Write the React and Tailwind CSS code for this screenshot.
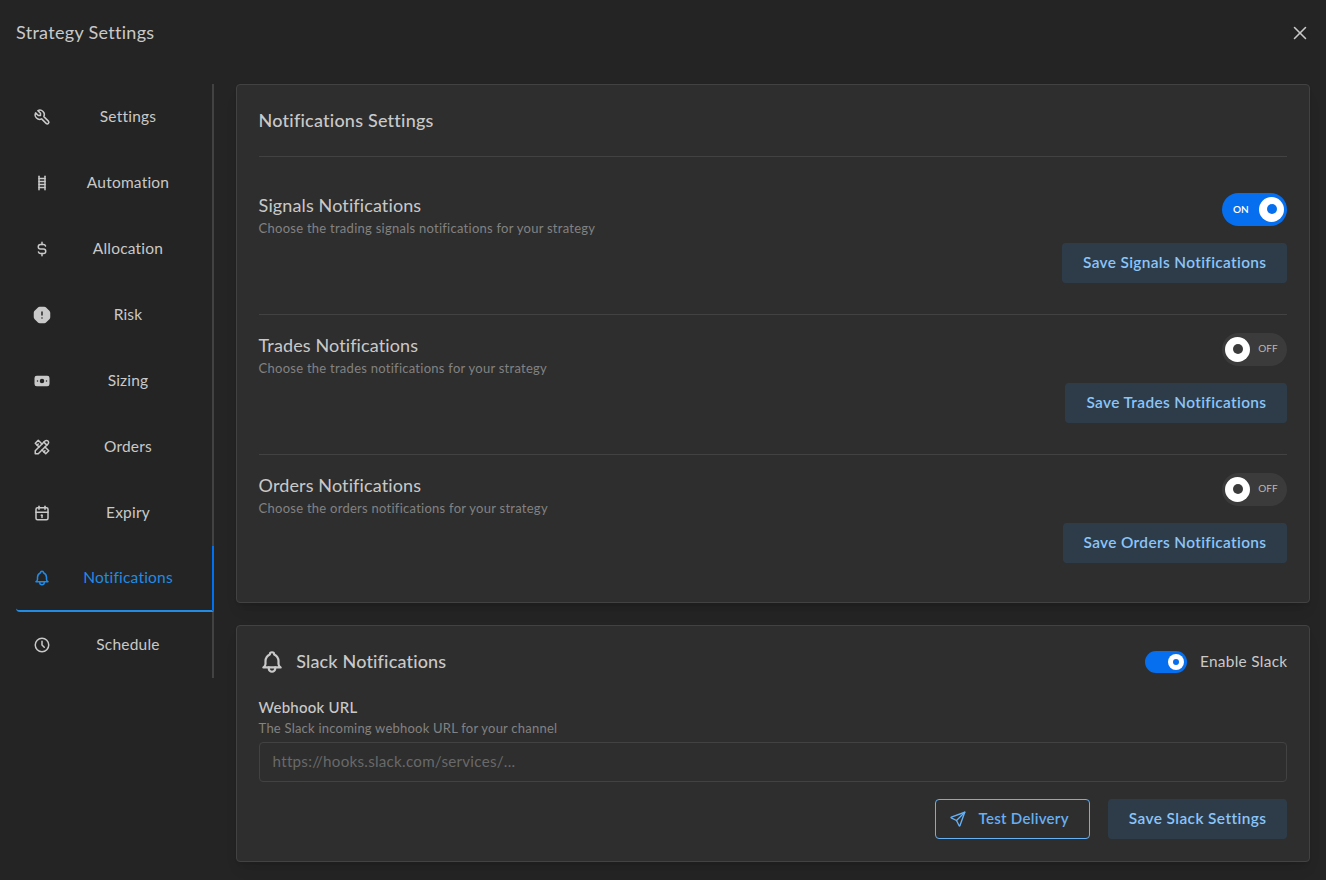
import React, { useState } from "react";
import {
  TbAlertOctagonFilled,
  TbBell,
  TbCalendar,
  TbCashBanknoteFilled,
  TbClock,
  TbCurrencyDollar,
  TbLadder,
  TbSend,
  TbTool,
  TbTools,
  TbX,
} from "react-icons/tb";

const TABS = [
  { label: "Settings", icon: TbTool },
  { label: "Automation", icon: TbLadder },
  { label: "Allocation", icon: TbCurrencyDollar },
  { label: "Risk", icon: TbAlertOctagonFilled },
  { label: "Sizing", icon: TbCashBanknoteFilled },
  { label: "Orders", icon: TbTools },
  { label: "Expiry", icon: TbCalendar },
  { label: "Notifications", icon: TbBell },
  { label: "Schedule", icon: TbClock },
];

const SECTIONS = [
  { name: "Signals", description: "Choose the trading signals notifications for your strategy" },
  { name: "Trades", description: "Choose the trades notifications for your strategy" },
  { name: "Orders", description: "Choose the orders notifications for your strategy" },
];

const CARD =
  "rounded border border-[#424242] bg-[#2e2e2e] px-[21.6px] shadow-[0_1px_3px_rgba(0,0,0,0.05),0_10px_15px_-5px_rgba(0,0,0,0.1),0_7px_7px_-5px_rgba(0,0,0,0.08)]";

function LabelSwitch({ checked, onChange }) {
  return (
    <button
      role="switch"
      aria-checked={checked}
      onClick={() => onChange(!checked)}
      className={`flex h-[33px] w-[65px] items-center rounded-full px-[3px] text-[10px] ${
        checked ? "flex-row-reverse bg-[#066ff0] font-semibold text-white" : "bg-[#3b3b3b] text-[#b8b8b8]"
      }`}
    >
      <span className="mb-px flex size-[25px] items-center justify-center rounded-full bg-white">
        <span className={`size-[10px] rounded-full ${checked ? "bg-[#066ff0]" : "bg-[#3b3b3b]"}`} />
      </span>
      <span className={`flex-1 text-center ${checked ? "pr-[3px] pb-px" : "pb-[2px] pl-px"}`}>
        {checked ? "ON" : "OFF"}
      </span>
    </button>
  );
}

function LightButton({ children }) {
  return (
    <button className="h-10 rounded bg-[#2e3c4a] px-[21px] text-[15.4px] font-semibold tracking-[0.36px] whitespace-nowrap text-[#8bc5f9]">
      {children}
    </button>
  );
}

export default function App() {
  const [active, setActive] = useState("Notifications");
  const [enabled, setEnabled] = useState({ Signals: true, Trades: false, Orders: false });
  const [slack, setSlack] = useState(true);

  return (
    <div className="h-[880px] overflow-hidden bg-[#242424] px-4 font-['Lato',sans-serif] text-[#c9c9c9]">
      <header className="flex h-[66px] items-center justify-between">
        <h1 className="pb-px text-[18px] tracking-[0.3px]">Strategy Settings</h1>
        <button aria-label="Close" className="-mr-px">
          <TbX className="size-[22px]" strokeWidth={1.7} />
        </button>
      </header>

      <div className="mt-[18px] flex gap-[22px]">
        <nav className="flex w-[198px] shrink-0 flex-col self-start">
          {TABS.map(({ label, icon: Icon }) => (
            <button
              key={label}
              onClick={() => setActive(label)}
              className={`flex h-[66px] items-center border-r-2 pr-4 pl-[16.6px] text-[15.5px] ${
                active === label
                  ? "rounded-bl border-b-2 border-r-[#0070f3] border-b-[#228be6] text-[#228be6]"
                  : "border-r-[#424242]"
              }`}
            >
              <Icon className="size-[18px]" />
              <span className="ml-[9.4px] flex-1 text-center tracking-[0.2px]">{label}</span>
            </button>
          ))}
        </nav>

        <main className="flex min-w-0 flex-1 flex-col gap-[22px]">
          <section className={`${CARD} h-[519px]`}>
            <h2 className="flex h-[71px] items-center text-[18px] font-medium tracking-[0.22px]">
              Notifications Settings
            </h2>
            <div className="border-t border-[#424242] pt-[18px]">
              {SECTIONS.map(({ name, description }, i) => (
                <div
                  key={name}
                  className={`flex justify-between pt-[18px] ${i > 0 ? "h-[140px] border-t border-[#424242]" : "h-[139px]"}`}
                >
                  <div className="-mt-px">
                    <h3 className="text-[18px] leading-[27px] tracking-[0.12px]">{name} Notifications</h3>
                    <p className="text-[13px] leading-[18px] tracking-[0.26px] text-[#828282]">{description}</p>
                  </div>
                  <div className="flex flex-col items-end gap-[17px]">
                    <LabelSwitch
                      checked={enabled[name]}
                      onChange={(value) => setEnabled({ ...enabled, [name]: value })}
                    />
                    <LightButton>Save {name} Notifications</LightButton>
                  </div>
                </div>
              ))}
            </div>
          </section>

          <section className={`${CARD} h-[237px]`}>
            <div className="flex h-[71px] items-center justify-between">
              <div className="flex items-center gap-[11.6px]">
                <TbBell className="size-[26px]" />
                <h2 className="text-[18px] font-medium tracking-[0.16px]">Slack Notifications</h2>
              </div>
              <label className="flex items-center gap-[13px] text-[15.4px] tracking-[0.3px]">
                <button
                  role="switch"
                  aria-checked={slack}
                  onClick={() => setSlack(!slack)}
                  className={`mt-px flex h-[22px] w-[42px] items-center rounded-full px-[3px] ${
                    slack ? "justify-end bg-[#066ff0]" : "bg-[#3b3b3b]"
                  }`}
                >
                  <span className="flex size-4 items-center justify-center rounded-full bg-white">
                    <span className={`size-1.5 rounded-full ${slack ? "bg-[#066ff0]" : "bg-[#3b3b3b]"}`} />
                  </span>
                </button>
                Enable Slack
              </label>
            </div>
            <label className="block">
              <span className="block text-[15px] leading-[21px] font-medium tracking-[0.22px]">Webhook URL</span>
              <span className="block text-[13px] leading-5 tracking-[0.22px] text-[#828282]">
                The Slack incoming webhook URL for your channel
              </span>
              <input
                type="text"
                placeholder="https://hooks.slack.com/services/..."
                className="mt-1 block h-10 w-full rounded border border-[#424242] bg-[#2e2e2e] px-[13px] pb-[2px] text-[15.2px] tracking-[0.25px] placeholder:text-[#696969]"
              />
            </label>
            <div className="mt-[17px] flex justify-end gap-[18px]">
              <button className="flex h-10 items-center gap-[11px] rounded border border-[#66b0f5] pr-5 pl-[13px] text-[15px] font-semibold tracking-[0.3px] text-[#66b0f5]">
                <TbSend className="size-[18px]" strokeWidth={1.8} />
                <span className="pb-px">Test Delivery</span>
              </button>
              <LightButton>
                <span className="tracking-[0.42px]">Save Slack Settings</span>
              </LightButton>
            </div>
          </section>
        </main>
      </div>
    </div>
  );
}
